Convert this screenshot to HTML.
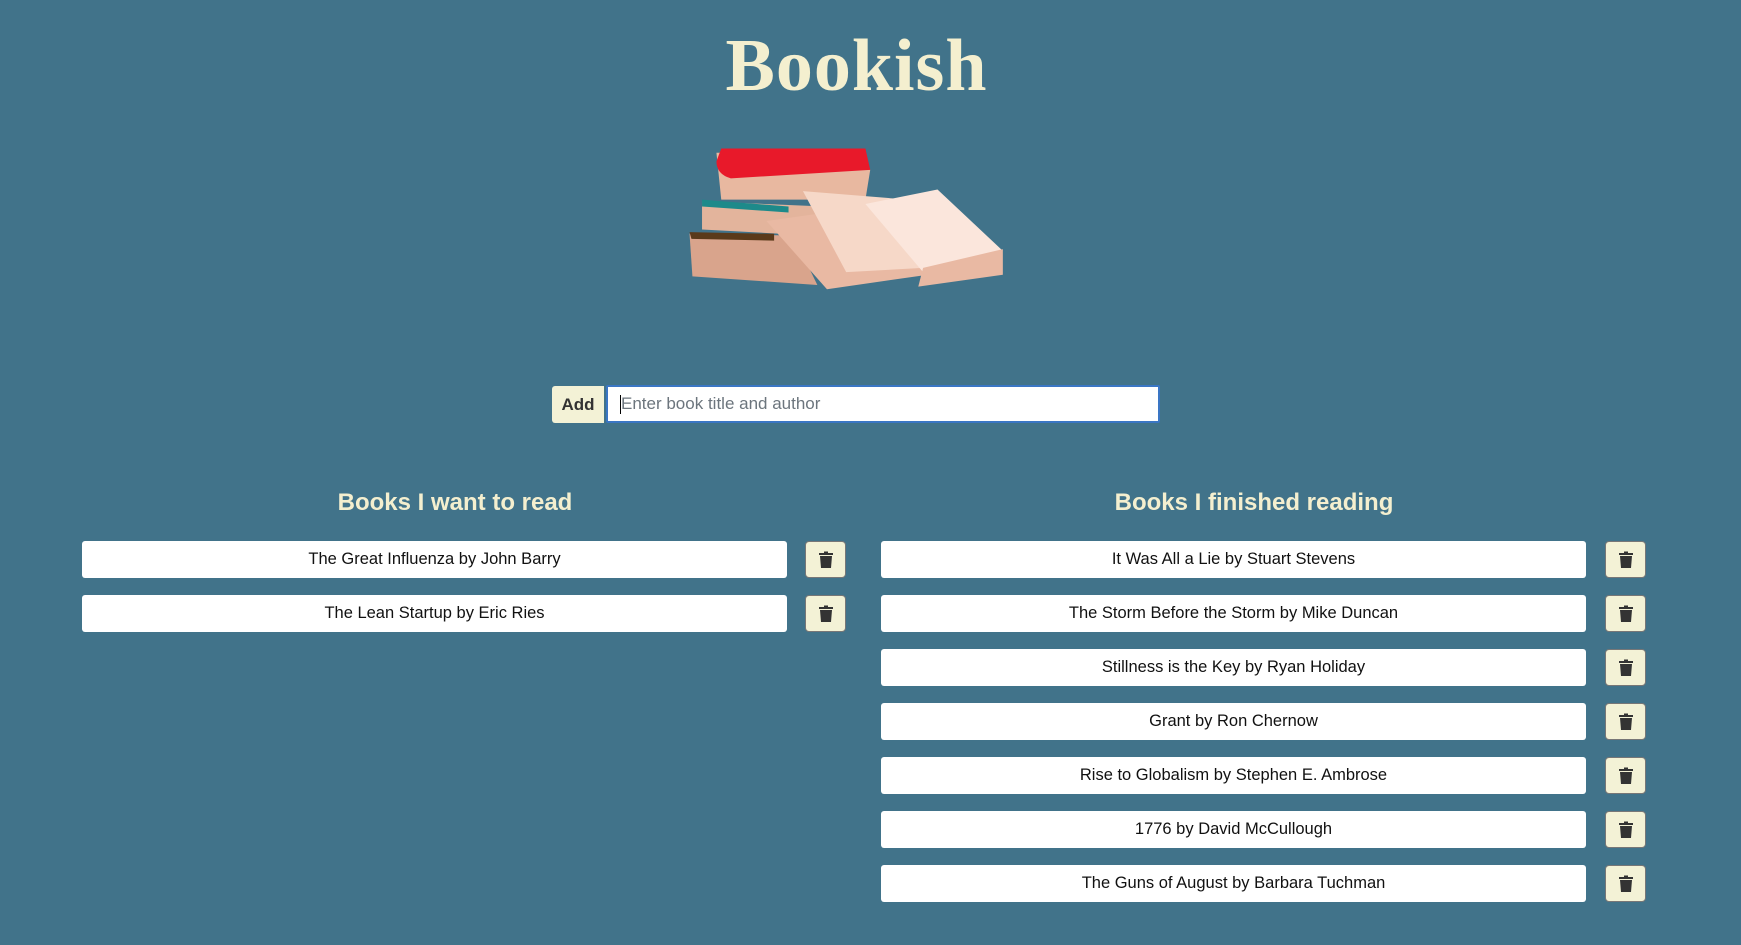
<!DOCTYPE html>
<html><head><meta charset="utf-8"><style>
body{margin:0;width:1741px;height:945px;background:#41738a;font-family:"Liberation Sans",sans-serif;position:relative;overflow:hidden}
h1{position:absolute;top:24px;left:-14px;width:1741px;text-align:center;margin:0;font-family:"Liberation Serif",serif;font-size:74px;font-weight:bold;color:#f4efcf;letter-spacing:1px}
.add{position:absolute;left:552px;top:386px;width:52px;height:37px;background:#f3f2d6;border-radius:3px 0 0 3px;font-weight:bold;font-size:17px;color:#333;text-align:center;line-height:37px}
.inp{position:absolute;left:606px;top:385px;width:554px;height:38px;background:#fff;border:2px solid #3a76c4;border-radius:2px;box-sizing:border-box;font-size:17px;color:#6c757d;line-height:34px;padding-left:13px}
.inp:before{content:"";position:absolute;left:12px;top:8px;width:1px;height:19px;background:#000}
h2{position:absolute;top:489px;margin:0;font-size:24px;font-weight:bold;color:#f4efcf;text-align:center}
.item{position:absolute;height:37px;background:#fff;border-radius:3px;text-align:center;line-height:37px;font-size:16.5px;color:#111}
.tr{position:absolute;width:41px;height:37px;background:#f3f2d6;border:1px solid #777;border-radius:4px;box-sizing:border-box;display:flex;align-items:center;justify-content:center}
</style></head><body>
<h1>Bookish</h1>
<svg style="position:absolute;left:678px;top:140px" width="346" height="162" viewBox="0 0 360 190" preserveAspectRatio="none">
<path d="M40 15 L165 15 L200 35 L195 70 L45 70 Z" fill="#e8b8a0"/>
<path d="M45 10 L195 10 L200 35 L55 45 Q40 40 40 25Z" fill="#e8192a"/>
<path d="M25 72 L195 80 L190 115 L25 105 Z" fill="#e3b49c"/>
<path d="M25 70 L115 78 L115 85 L25 78Z" fill="#1d8a8a"/>
<path d="M12 110 L120 112 L145 170 L15 160 Z" fill="#d9a48c"/>
<path d="M12 108 L100 110 L100 118 L14 116Z" fill="#5a3a1a"/>
<path d="M92 95 L250 70 L260 158 L155 175 Z" fill="#e9b9a3"/>
<path d="M130 60 L240 70 L255 150 L175 155 Z" fill="#f6d8c8"/>
<path d="M195 75 L270 58 L338 130 L255 155 Z" fill="#fbe6dc"/>
<path d="M255 150 L338 128 L338 158 L250 172 Z" fill="#e9b9a3"/>
</svg>
<div class="add">Add</div>
<div class="inp">Enter book title and author</div>
<h2 style="left:255px;width:400px">Books I want to read</h2>
<h2 style="left:1054px;width:400px">Books I finished reading</h2>
<div class="item" style="left:82px;top:541px;width:705px">The Great Influenza by John Barry</div>
<div class="item" style="left:82px;top:595px;width:705px">The Lean Startup by Eric Ries</div>
<div class="tr" style="left:805px;top:541px"><svg width="16" height="18" viewBox="0 0 16 18"><rect x="1" y="2" width="14" height="2" fill="#333"/><rect x="6" y="0.5" width="4" height="2" fill="#333"/><path d="M2 5H14L13 17H3Z" fill="#333"/></svg></div>
<div class="tr" style="left:805px;top:595px"><svg width="16" height="18" viewBox="0 0 16 18"><rect x="1" y="2" width="14" height="2" fill="#333"/><rect x="6" y="0.5" width="4" height="2" fill="#333"/><path d="M2 5H14L13 17H3Z" fill="#333"/></svg></div>
<div class="item" style="left:881px;top:541px;width:705px">It Was All a Lie by Stuart Stevens</div>
<div class="item" style="left:881px;top:595px;width:705px">The Storm Before the Storm by Mike Duncan</div>
<div class="item" style="left:881px;top:649px;width:705px">Stillness is the Key by Ryan Holiday</div>
<div class="item" style="left:881px;top:703px;width:705px">Grant by Ron Chernow</div>
<div class="item" style="left:881px;top:757px;width:705px">Rise to Globalism by Stephen E. Ambrose</div>
<div class="item" style="left:881px;top:811px;width:705px">1776 by David McCullough</div>
<div class="item" style="left:881px;top:865px;width:705px">The Guns of August by Barbara Tuchman</div>
<div class="tr" style="left:1605px;top:541px"><svg width="16" height="18" viewBox="0 0 16 18"><rect x="1" y="2" width="14" height="2" fill="#333"/><rect x="6" y="0.5" width="4" height="2" fill="#333"/><path d="M2 5H14L13 17H3Z" fill="#333"/></svg></div>
<div class="tr" style="left:1605px;top:595px"><svg width="16" height="18" viewBox="0 0 16 18"><rect x="1" y="2" width="14" height="2" fill="#333"/><rect x="6" y="0.5" width="4" height="2" fill="#333"/><path d="M2 5H14L13 17H3Z" fill="#333"/></svg></div>
<div class="tr" style="left:1605px;top:649px"><svg width="16" height="18" viewBox="0 0 16 18"><rect x="1" y="2" width="14" height="2" fill="#333"/><rect x="6" y="0.5" width="4" height="2" fill="#333"/><path d="M2 5H14L13 17H3Z" fill="#333"/></svg></div>
<div class="tr" style="left:1605px;top:703px"><svg width="16" height="18" viewBox="0 0 16 18"><rect x="1" y="2" width="14" height="2" fill="#333"/><rect x="6" y="0.5" width="4" height="2" fill="#333"/><path d="M2 5H14L13 17H3Z" fill="#333"/></svg></div>
<div class="tr" style="left:1605px;top:757px"><svg width="16" height="18" viewBox="0 0 16 18"><rect x="1" y="2" width="14" height="2" fill="#333"/><rect x="6" y="0.5" width="4" height="2" fill="#333"/><path d="M2 5H14L13 17H3Z" fill="#333"/></svg></div>
<div class="tr" style="left:1605px;top:811px"><svg width="16" height="18" viewBox="0 0 16 18"><rect x="1" y="2" width="14" height="2" fill="#333"/><rect x="6" y="0.5" width="4" height="2" fill="#333"/><path d="M2 5H14L13 17H3Z" fill="#333"/></svg></div>
<div class="tr" style="left:1605px;top:865px"><svg width="16" height="18" viewBox="0 0 16 18"><rect x="1" y="2" width="14" height="2" fill="#333"/><rect x="6" y="0.5" width="4" height="2" fill="#333"/><path d="M2 5H14L13 17H3Z" fill="#333"/></svg></div>
</body></html>
